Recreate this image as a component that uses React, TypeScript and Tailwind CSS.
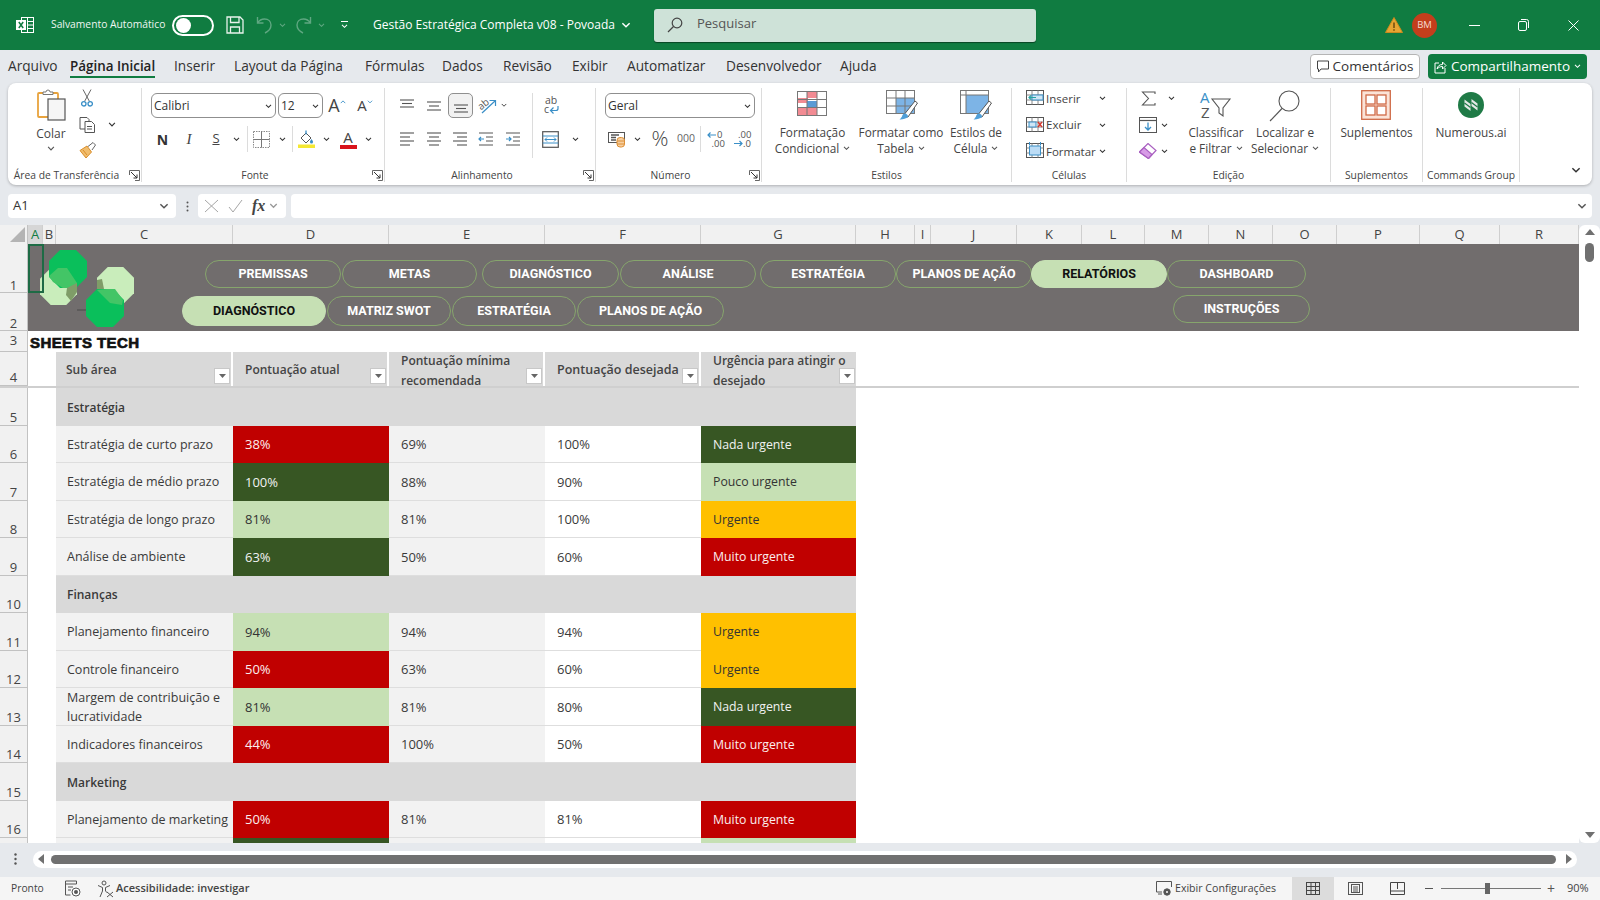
import type { ReactNode } from "react";

const BLUE = "#3a8fc7";

function Chev({ color = "#555", w = 8 }: { color?: string; w?: number }) {
  return (
    <svg width={w} height={w * 0.6} viewBox="0 0 8 5" fill="none" stroke={color} strokeWidth="1.2">
      <path d="M1 1l3 3 3-3" />
    </svg>
  );
}

function Launcher() {
  return (
    <svg width="11" height="11" viewBox="0 0 11 11" fill="none" stroke="#666">
      <path d="M.5 5V.5h10v10H6" />
      <path d="M2 2l6 6M8 4.5V8H4.500" stroke="#333" />
    </svg>
  );
}

function Slot({ className, children }: { className: string; children?: ReactNode }) {
  return <div className={`flex shrink-0 items-center justify-center ${className}`}>{children}</div>;
}

function VSep() {
  return <div className="mx-0 h-[26px] w-px shrink-0 bg-[#dcdcdc]" />;
}

function Group({
  label,
  launcher,
  className,
  children,
}: {
  label: string;
  launcher?: boolean;
  className: string;
  children: ReactNode;
}) {
  return (
    <div className={`flex h-[94px] shrink-0 flex-col border-r border-[#dcdcdc] ${className}`}>
      <div className="h-[80px]">{children}</div>
      <div className="flex h-[14px] items-center text-[10.3px] leading-[14px] text-[#444]">
        <div className="flex-1 whitespace-nowrap text-center">{label}</div>
        {launcher && (
          <div className="flex w-[16px] justify-end pr-[1px]">
            <Launcher />
          </div>
        )}
      </div>
    </div>
  );
}

function BigButton({ icon, lines }: { icon: ReactNode; lines: ReactNode[] }) {
  return (
    <div className="flex flex-col items-center whitespace-nowrap text-[11.8px] leading-[16px] text-[#444]">
      <div className="flex h-[36px] items-start pt-[2px]">{icon}</div>
      {lines.map((l, i) => (
        <div key={i} className="flex items-center gap-[4px]">
          {l}
        </div>
      ))}
    </div>
  );
}

/* title bar icons */
function ExcelLogo() {
  return (
    <svg width="18" height="18" viewBox="0 0 18 18">
      <rect x="5.500" y="1.500" width="12" height="15" fill="none" stroke="#fff" />
      <path d="M11.500 1.500v15M11.500 5.500h6M11.500 9h6M11.500 12.500h6" stroke="#fff" />
      <rect x="0" y="4" width="10" height="10" fill="#fff" />
      <path d="M2.800 6l4.400 6M7.200 6l-4.400 6" stroke="#107c41" strokeWidth="1.500" />
    </svg>
  );
}

function SaveIcon() {
  return (
    <svg width="18" height="18" viewBox="0 0 18 18" fill="none" stroke="#e8f2ec" strokeWidth="1.300">
      <path d="M1 1h13l3 3v13H1zM4.500 1v5.500h8.500V1M4.500 17v-6h9v6" />
    </svg>
  );
}

function Undo({ flip }: { flip?: boolean }) {
  return (
    <svg width="17" height="18" viewBox="0 0 17 18" fill="none" stroke="#5fa781" strokeWidth="1.400" className={flip ? "-scale-x-100" : ""}>
      <path d="M1.500 1v6h6M1.500 7c2-3 4-4 7-4 4 0 6.500 2.500 6.500 6 0 3-2 6-6 8" />
    </svg>
  );
}

function SearchIcon() {
  return (
    <svg width="16" height="16" viewBox="0 0 16 16" fill="none" stroke="#444" strokeWidth="1.200">
      <circle cx="10" cy="6" r="4.800" />
      <path d="M6.500 9.500L1 15" />
    </svg>
  );
}

function Warn() {
  return (
    <svg width="18" height="16" viewBox="0 0 18 16">
      <path d="M9 .5L17.500 15.500H.5z" fill="#e6a532" stroke="#c98a1e" />
      <path d="M9 5.500v5.500M9 12.300v1.500" stroke="#5b3d08" strokeWidth="1.300" />
    </svg>
  );
}

function CommentIcon() {
  return (
    <svg width="12" height="13" viewBox="0 0 12 13" fill="none" stroke="#444">
      <path d="M.5 1h11v8H4L1.500 12V9H.5z" />
    </svg>
  );
}

function ShareIcon() {
  return (
    <svg width="13" height="14" viewBox="0 0 13 14" fill="none" stroke="#fff">
      <path d="M5 3H1v10h10V8M3 9c.5-3 2.500-4.500 5.500-4.500V2L12 5.500 8.500 9V6.500C6 6.500 4.500 7.500 3 9z" />
    </svg>
  );
}

/* clipboard */
function PasteIcon() {
  return (
    <svg width="29" height="33" viewBox="0 0 29 33">
      <rect x="1" y="5" width="20" height="24" rx="1" fill="#fff" stroke="#e8a33d" strokeWidth="1.800" />
      <path d="M6 6V4h3a2 2 0 014 0h3v2.500H6z" fill="#fff" stroke="#777" />
      <rect x="11" y="11" width="17" height="21" fill="#f6f6f6" stroke="#555" strokeWidth="1.200" />
    </svg>
  );
}

function CutIcon() {
  return (
    <svg width="12" height="18" viewBox="0 0 12 18" fill="none">
      <path d="M2 .5l6.500 12M10 .5L3.500 12.500" stroke="#666" />
      <circle cx="2.800" cy="14.800" r="2.200" stroke={BLUE} strokeWidth="1.300" />
      <circle cx="9.200" cy="14.800" r="2.200" stroke={BLUE} strokeWidth="1.300" />
    </svg>
  );
}

function CopyIcon() {
  return (
    <svg width="17" height="16" viewBox="0 0 17 16" fill="#fff" stroke="#555">
      <path d="M1 .5h7l2 2V12H1z" />
      <path d="M6 4.500h6.500l3 3v8H6z" />
      <path d="M8 9.500h5M8 12h5" />
    </svg>
  );
}

function PainterIcon() {
  return (
    <svg width="17" height="17" viewBox="0 0 17 17">
      <path d="M1 8.500L8 4l4.500 6L7 16z" fill="#f1bd6d" stroke="#d98e2b" />
      <path d="M9 4.500L14 .5l2.500 2.500-3.500 5" fill="#fff" stroke="#666" />
      <path d="M4 8l4 5" stroke="#d98e2b" />
    </svg>
  );
}

function Select({ label, className }: { label: string; className: string }) {
  return (
    <div className={`flex h-[25px] items-center justify-between rounded-[6px] border border-[#8f8f8f] bg-white pl-[2px] pr-[3px] pt-[1px] text-[12px] text-[#333] ${className}`}>
      <span>{label}</span>
      <Chev color="#333" w={7} />
    </div>
  );
}

function BordersIcon() {
  return (
    <svg width="17" height="17" viewBox="0 0 17 17" fill="none" stroke="#8a8a8a" strokeDasharray="1.500 1">
      <rect x=".5" y=".5" width="16" height="16" />
      <path d="M8.500.5v16M.5 8.500h16" strokeDasharray="none" stroke="#777" />
    </svg>
  );
}

function FillIcon() {
  return (
    <svg width="18" height="18" viewBox="0 0 18 18">
      <path d="M3 8l5-5 5 5-5 5z" fill="#fff" stroke="#555" />
      <path d="M8 .5v4" stroke={BLUE} strokeWidth="1.300" />
      <path d="M13.500 9c1 1.500 1.500 2 1.500 3a1.500 1.500 0 01-3 0c0-1 .5-1.500 1.500-3z" fill={BLUE} />
      <rect x="0" y="14.500" width="17" height="3.500" fill="#f5e832" />
    </svg>
  );
}

function FontColor() {
  return (
    <div className="flex w-[17px] flex-col items-center">
      <span className="text-[15px] leading-[14px] text-[#444]">A</span>
      <div className="mt-px h-[4px] w-[17px] bg-[#d8141c]" />
    </div>
  );
}

function Lines({ rows }: { rows: [number, number, number][] }) {
  return (
    <svg width="16" height="14" viewBox="0 0 16 14" stroke="#555" strokeWidth="1.100">
      {rows.map(([a, b, y], i) => (
        <path key={i} d={`M${a} ${y}H${b}`} />
      ))}
    </svg>
  );
}

function OrientIcon() {
  return (
    <svg width="19" height="17" viewBox="0 0 19 17" fill="none" overflow="visible">
      <text x="0" y="11" fontSize="10" fill="#555" fontFamily="Open Sans" transform="rotate(-40 5 8)">ab</text>
      <path d="M4 16L17 4M11.500 3.500H17.500V9" stroke={BLUE} strokeWidth="1.200" />
    </svg>
  );
}

function WrapIcon() {
  return (
    <svg width="16" height="19" viewBox="0 0 16 19" fill="none" overflow="visible">
      <text x="1" y="8" fontSize="10.500" fill="#555" fontFamily="Open Sans">ab</text>
      <text x="0" y="17" fontSize="10.500" fill="#555" fontFamily="Open Sans">c</text>
      <path d="M14 10v2.500a2 2 0 01-2 2H7M9.500 11.500L6.500 14.500l3 3" stroke={BLUE} strokeWidth="1.200" />
    </svg>
  );
}

function IndentIcon({ inc }: { inc?: boolean }) {
  return (
    <svg width="16" height="14" viewBox="0 0 16 14" fill="none">
      <path d="M1 1h14M8 5h7M8 9h7M1 13h14" stroke="#555" />
      <path d={inc ? "M1 7h5M4 5l2 2-2 2" : "M6 7H1M3 5L1 7l2 2"} stroke={BLUE} strokeWidth="1.200" />
    </svg>
  );
}

function MergeIcon() {
  return (
    <svg width="17" height="17" viewBox="0 0 17 17" fill="#fff">
      <rect x=".7" y=".7" width="15.600" height="15.600" stroke="#555" strokeWidth="1.200" />
      <path d="M.7 5h15.600M.7 12h15.600" stroke={BLUE} />
      <path d="M3 8.500h11M5 6.500l-2 2 2 2M12 6.500l2 2-2 2" stroke={BLUE} fill="none" />
    </svg>
  );
}

function CurrencyIcon() {
  return (
    <svg width="18" height="17" viewBox="0 0 18 17">
      <rect x=".5" y="1.500" width="16" height="10" fill="#fff" stroke="#555" />
      <path d="M3 4h8M3 6.500h5M3 9h5" stroke="#555" strokeWidth="1.300" />
      <rect x="9" y="6.500" width="7.500" height="9.500" rx="3" fill="#f7cfa0" stroke="#dd8f35" />
      <path d="M9 10h7.500M9 13h7.500" stroke="#dd8f35" />
    </svg>
  );
}

function DecimalIcon({ inc }: { inc?: boolean }) {
  return (
    <svg width="18" height="18" viewBox="0 0 18 18" fontFamily="Open Sans" fontSize="9.500" fill="#555" overflow="visible">
      <text x={inc ? 10 : 5} y="7.500">{inc ? "0" : ".00"}</text>
      <text x={inc ? 4.500 : 10} y="17">{inc ? ".00" : ".0"}</text>
      {inc ? (
        <path d="M9 5H1M3.500 2.500L1 5l2.500 2.500" stroke={BLUE} fill="none" strokeWidth="1.200" />
      ) : (
        <path d="M1 13.500h8M6.500 11L9 13.500 6.500 16" stroke={BLUE} fill="none" strokeWidth="1.200" />
      )}
    </svg>
  );
}

/* styles */
function Brush() {
  return (
    <g>
      <path d="M17 26l12-15 2.500 2L22 27z" fill="#fff" stroke="#555" />
      <path d="M13.500 29.500c2 .5 7-1 8.500-2.500 .5-2-2-4-4-3.500-2 1-1.500 4-4.500 6z" fill="#4f9fd8" />
    </g>
  );
}

function CondFmtIcon() {
  return (
    <svg width="30" height="25" viewBox="0 0 30 25">
      <rect x=".5" y=".5" width="29" height="24" fill="#fff" stroke="#777" />
      <rect x="10" y="1" width="10" height="6" fill="#f28b93" />
      <rect x="1" y="7" width="10" height="5" fill="#f28b93" />
      <rect x="10" y="10" width="10" height="6" fill="#5b9bd5" />
      <rect x="10" y="17" width="10" height="7" fill="#f28b93" />
      <rect x="1" y="17" width="9" height="7" fill="#f28b93" />
      <path d="M10 .5v24M20 .5v24M.5 8.500h29M.5 16.500h29" stroke="#777" />
    </svg>
  );
}

function TableIcon() {
  return (
    <svg width="34" height="30" viewBox="0 0 34 30" className="ml-[4px]">
      <rect x=".5" y=".5" width="28" height="23" fill="#fff" stroke="#777" />
      <rect x="10" y="8" width="18" height="15" fill="#7db4e6" />
      <path d="M10 .5v23M19 .5v23M.5 8h28M.5 16h28" stroke="#777" />
      <Brush />
    </svg>
  );
}

function CellStyleIcon() {
  return (
    <svg width="34" height="30" viewBox="0 0 34 30" className="ml-[2px]">
      <rect x=".5" y=".5" width="28" height="23" fill="#fff" stroke="#777" />
      <rect x="6" y="5" width="22" height="18" fill="#7db4e6" />
      <path d="M.5 5h28M6 .5v23" stroke="#777" />
      <Brush />
    </svg>
  );
}

function CellOpIcon({ type }: { type: "in" | "del" | "fmt" }) {
  return (
    <svg width="19" height="18" viewBox="0 0 19 18" fill="none">
      <rect x=".5" y="1.500" width="17" height="14" fill="#fff" stroke="#555" />
      <path d="M6 1.500v14M12 1.500v14M.5 6h17M.5 11h17" stroke="#888" />
      {type === "in" && (
        <>
          <rect x="6" y="6" width="11" height="5" fill="#cfe6f5" stroke={BLUE} />
          <path d="M10 8.500H3M5 6.500l-2 2 2 2" stroke="#27a3a3" strokeWidth="1.200" />
        </>
      )}
      {type === "del" && (
        <>
          <rect x="3" y="6" width="7" height="5" fill="#cfe6f5" stroke={BLUE} />
          <path d="M12 6l4 5M16 6l-4 5" stroke="#d8352a" strokeWidth="1.300" />
        </>
      )}
      {type === "fmt" && (
        <>
          <rect x="3.500" y="4" width="11" height="9" fill="#bcdcf5" stroke={BLUE} />
          <path d="M3.500 0v3M14.500 0v3" stroke={BLUE} />
        </>
      )}
    </svg>
  );
}

function SumIcon() {
  return (
    <svg width="15" height="15" viewBox="0 0 15 15" fill="none" stroke="#555" strokeWidth="1.100">
      <path d="M14 3V1H1.500l6 6.500-6 6.500H14v-2" />
    </svg>
  );
}

function FillDown() {
  return (
    <svg width="18" height="16" viewBox="0 0 18 16" fill="none">
      <rect x=".5" y=".5" width="17" height="15" fill="#fff" stroke="#555" />
      <path d="M.5 3.500h17" stroke="#555" strokeWidth="1.200" />
      <path d="M9 5.500v7M6 10l3 3 3-3" stroke={BLUE} strokeWidth="1.300" />
    </svg>
  );
}

function ClearIcon() {
  return (
    <svg width="18" height="16" viewBox="0 0 18 16">
      <path d="M.5 9L9 .5l8 7-7.500 8z" fill="#fff" stroke="#a95fc0" strokeWidth="1.200" />
      <path d="M.5 9L5 4.500l8 7-3.500 4z" fill="#d79be6" stroke="#a95fc0" strokeWidth="1.200" />
    </svg>
  );
}

function SortIcon() {
  return (
    <svg width="32" height="30" viewBox="0 0 32 30" fontFamily="Open Sans" fontSize="15" overflow="visible">
      <text x="0" y="13" fill={BLUE}>A</text>
      <text x="1" y="28" fill="#555">Z</text>
      <path d="M12 9h18l-7 9v8l-4-3v-5z" fill="#fff" stroke="#555" strokeWidth="1.100" />
    </svg>
  );
}

function FindIcon() {
  return (
    <svg width="32" height="32" viewBox="0 0 32 32" fill="none" stroke="#555" strokeWidth="1.100">
      <circle cx="20" cy="11" r="10" fill="#fff" />
      <path d="M13 18.500L1 31" />
    </svg>
  );
}

function AddinsIcon() {
  return (
    <svg width="30" height="30" viewBox="0 0 30 30" fill="#fbe3d7" stroke="#cf6a47" strokeWidth="1.300">
      <rect x=".7" y=".7" width="28.600" height="28.600" />
      <rect x="5" y="5" width="9" height="9" fill="#fff" />
      <rect x="16" y="5" width="9" height="9" fill="#fff" />
      <rect x="5" y="16" width="9" height="9" fill="#fff" />
      <rect x="16" y="16" width="9" height="9" fill="#fff" />
    </svg>
  );
}

function NumerousIcon() {
  return (
    <svg width="26" height="26" viewBox="0 0 26 26">
      <circle cx="13" cy="13" r="13" fill="#1f7a46" />
      <path d="M6.500 7.500l6 4.500v7l-6-4.500z" fill="#e4e9e6" />
      <path d="M13.500 7l6 4.500v7l-6-4.500z" fill="#e4e9e6" />
      <path d="M6.500 11l6 4.500M13.500 10.500l6 4.500" stroke="#1f7a46" strokeWidth="1.200" />
    </svg>
  );
}

/* status bar */
function MacroIcon() {
  return (
    <svg width="16" height="17" viewBox="0 0 16 17" fill="none" stroke="#555">
      <path d="M.5 1h11v3H.5zM.5 4v11h5M3 7h5M3 10h3" />
      <circle cx="11" cy="12" r="4" fill="#fff" />
      <circle cx="11" cy="12" r="2" fill="#555" stroke="none" />
    </svg>
  );
}

function AccessIcon() {
  return (
    <svg width="17" height="18" viewBox="0 0 17 18" fill="none" stroke="#555">
      <circle cx="7" cy="3" r="2" />
      <path d="M1 5.500l4.500 2V11L3 17M13 5.500l-4.500 2V11l2 2M10 12l6 5M16 12l-6 5" />
    </svg>
  );
}

function DisplayIcon() {
  return (
    <svg width="17" height="16" viewBox="0 0 17 16" fill="none" stroke="#555">
      <path d="M6 11H.5V.5h15V6" />
      <path d="M2 13h4" />
      <circle cx="11" cy="11" r="3.200" fill="#555" />
      <circle cx="11" cy="11" r="1" fill="#fff" stroke="none" />
    </svg>
  );
}

function Dropdown() {
  return (
    <div className="absolute bottom-[2px] right-[1px] flex h-[16px] w-[16px] items-center justify-center border border-[#c8c8c8] bg-white">
      <svg width="7" height="4" viewBox="0 0 7 4">
        <path d="M0 0h7L3.500 4z" fill="#666" />
      </svg>
    </div>
  );
}

function Logo() {
  const oct = (x: number, y: number, s: number) => {
    const c = s * 0.29;
    return `${x + c},${y} ${x + s - c},${y} ${x + s},${y + c} ${x + s},${y + s - c} ${x + s - c},${y + s} ${x + c},${y + s} ${x},${y + s - c} ${x},${y + c}`;
  };
  return (
    <svg width="120" height="90" viewBox="0 0 120 90" className="absolute left-[8px] top-[2px]">
      <polygon points={oct(4, 22, 37)} fill="#c9edbb" />
      <polygon points={oct(13, 4, 38)} fill="#0abf5b" />
      <polygon points="13,30 22,22 31,22 41,37 40,42 27,42 17,36" fill="#43c566" />
      <polygon points="31,42 41,37 41,46 35,55 30,49" fill="#7f9d68" />
      <polygon points={oct(61, 21, 37)} fill="#c9edbb" />
      <polygon points="61,34 66,33 68,43 61,43" fill="#7f9d68" />
      <polygon points={oct(50, 43, 38)} fill="#0abf5b" />
      <polygon points="61,44 71,43 79,43 87,54 86,59 74,57" fill="#43c566" />
      <path d="M41 64h9" stroke="#4a4a4a" />
    </svg>
  );
}

type Status = "red" | "dark" | "light" | "amber";

type Row =
  | { cat: string }
  | { name: string; cur: string; curS: Status; min: string; want: string; urg: string; urgS: Status };

const statusClass: Record<Status, string> = {
  red: "bg-[#c00000] text-[#fbeeee]",
  dark: "bg-[#375623] text-[#f2f2f2]",
  light: "bg-[#c6e0b4] text-[#333]",
  amber: "bg-[#ffc000] text-[#333]",
};

const rows: Row[] = [
  { cat: "Estratégia" },
  { name: "Estratégia de curto prazo", cur: "38%", curS: "red", min: "69%", want: "100%", urg: "Nada urgente", urgS: "dark" },
  { name: "Estratégia de médio prazo", cur: "100%", curS: "dark", min: "88%", want: "90%", urg: "Pouco urgente", urgS: "light" },
  { name: "Estratégia de longo prazo", cur: "81%", curS: "light", min: "81%", want: "100%", urg: "Urgente", urgS: "amber" },
  { name: "Análise de ambiente", cur: "63%", curS: "dark", min: "50%", want: "60%", urg: "Muito urgente", urgS: "red" },
  { cat: "Finanças" },
  { name: "Planejamento financeiro", cur: "94%", curS: "light", min: "94%", want: "94%", urg: "Urgente", urgS: "amber" },
  { name: "Controle financeiro", cur: "50%", curS: "red", min: "63%", want: "60%", urg: "Urgente", urgS: "amber" },
  { name: "Margem de contribuição e lucratividade", cur: "81%", curS: "light", min: "81%", want: "80%", urg: "Nada urgente", urgS: "dark" },
  { name: "Indicadores financeiros", cur: "44%", curS: "red", min: "100%", want: "50%", urg: "Muito urgente", urgS: "red" },
  { cat: "Marketing" },
  { name: "Planejamento de marketing", cur: "50%", curS: "red", min: "81%", want: "81%", urg: "Muito urgente", urgS: "red" },
];

const columns = [
  { l: "A", w: "w-[15px]" },
  { l: "B", w: "w-[13px]" },
  { l: "C", w: "w-[177px]" },
  { l: "D", w: "w-[156px]" },
  { l: "E", w: "w-[156px]" },
  { l: "F", w: "w-[156px]" },
  { l: "G", w: "w-[155px]" },
  { l: "H", w: "w-[59px]" },
  { l: "I", w: "w-[16px]" },
  { l: "J", w: "w-[86px]" },
  { l: "K", w: "w-[65px]" },
  { l: "L", w: "w-[63px]" },
  { l: "M", w: "w-[64px]" },
  { l: "N", w: "w-[64px]" },
  { l: "O", w: "w-[64px]" },
  { l: "P", w: "w-[83px]" },
  { l: "Q", w: "w-[80px]" },
  { l: "R", w: "w-[79px]" },
];

const tabs = [
  { t: "Arquivo", w: "w-[62px]" },
  { t: "Página Inicial", w: "w-[104px]" },
  { t: "Inserir", w: "w-[60px]" },
  { t: "Layout da Página", w: "w-[131px]" },
  { t: "Fórmulas", w: "w-[77px]" },
  { t: "Dados", w: "w-[61px]" },
  { t: "Revisão", w: "w-[69px]" },
  { t: "Exibir", w: "w-[55px]" },
  { t: "Automatizar", w: "w-[99px]" },
  { t: "Desenvolvedor", w: "w-[114px]" },
  { t: "Ajuda", w: "w-[60px]" },
];

const pillsTop = [
  { t: "PREMISSAS", c: "w-[136px]" },
  { t: "METAS", c: "w-[135px] ml-[1px]" },
  { t: "DIAGNÓSTICO", c: "w-[137px] ml-[5px]" },
  { t: "ANÁLISE", c: "w-[136px] ml-[1px]" },
  { t: "ESTRATÉGIA", c: "w-[136px] ml-[4px]" },
  { t: "PLANOS DE AÇÃO", c: "w-[136px]" },
  { t: "RELATÓRIOS", c: "w-[136px] -ml-[1px]", on: true },
  { t: "DASHBOARD", c: "w-[139px]" },
];

const pillsBottom = [
  { t: "DIAGNÓSTICO", c: "w-[144px]", on: true },
  { t: "MATRIZ SWOT", c: "w-[124px] ml-[1px]" },
  { t: "ESTRATÉGIA", c: "w-[124px] ml-[1px]" },
  { t: "PLANOS DE AÇÃO", c: "w-[147px] ml-[1px]" },
];

function Pill({ t, c, on, h = "h-[28px]" }: { t: string; c: string; on?: boolean; h?: string }) {
  return (
    <div
      className={`flex shrink-0 items-center justify-center rounded-full border font-['Roboto',sans-serif] text-[12.5px] font-bold ${h} ${c} ${
        on ? "border-[#c6e0b4] bg-[#c6e0b4] text-[#111]" : "border-[#86a56c] text-white"
      }`}
    >
      {t}
    </div>
  );
}

function RowHead({ n, className = "", lead = "leading-[15px]" }: { n?: number; className?: string; lead?: string }) {
  return (
    <div className={`flex w-[28px] shrink-0 items-end justify-center border-b border-r border-[#c2c2c2] bg-[#f1f1f1] text-[13px] text-[#444] ${lead} ${className}`}>
      {n}
    </div>
  );
}

function Ribbon() {
  return (
    <div className="flex h-[102px] w-[1584px] shrink-0 rounded-[8px] bg-white pt-[5px] shadow-[0_1px_3px_rgba(0,0,0,0.25)]">
      <Group label="Área de Transferência" launcher className="w-[134px]">
        <div className="flex">
          <div className="flex w-[70px] flex-col items-center pl-[16px] text-[12px] text-[#444]">
            <PasteIcon />
            <div className="mt-[5px] leading-[16px]">Colar</div>
            <div className="mt-[4px]">
              <Chev />
            </div>
          </div>
          <div className="-mt-[4px] flex flex-col">
            <Slot className="h-[27px] w-[18px]"><CutIcon /></Slot>
            <div className="flex items-center">
              <Slot className="h-[27px] w-[18px]"><CopyIcon /></Slot>
              <div className="ml-[12px]"><Chev color="#333" /></div>
            </div>
            <Slot className="h-[24px] w-[18px]"><PainterIcon /></Slot>
          </div>
        </div>
      </Group>

      <Group label="Fonte" launcher className="w-[243px]">
        <div className="flex h-[30px] items-end pl-[9px]">
          <Select label="Calibri" className="w-[125px]" />
          <Select label="12" className="ml-[2px] w-[45px]" />
          <Slot className="h-[25px] w-[28px] text-[18px] text-[#444]">
            A<span className="mb-[8px]"><svg width="6" height="4" viewBox="0 0 8 5" fill="none" stroke={BLUE} strokeWidth="1.200"><path d="M1 4l3-3 3 3" /></svg></span>
          </Slot>
          <Slot className="h-[25px] w-[28px] text-[15px] text-[#444]">
            A<span className="mb-[8px]"><Chev color={BLUE} w={6} /></span>
          </Slot>
        </div>
        <div className="mt-[10px] flex h-[22px] items-center pl-[8px] text-[#444]">
          <Slot className="w-[25px] text-[14px] font-bold text-[#333]">N</Slot>
          <Slot className="w-[28px] font-['Liberation_Serif',serif] text-[15px] italic">I</Slot>
          <Slot className="w-[26px] text-[13px] underline">S</Slot>
          <Slot className="w-[15px]"><Chev color="#333" w={7} /></Slot>
          <Slot className="w-[6px]"><VSep /></Slot>
          <Slot className="w-[22px]"><BordersIcon /></Slot>
          <Slot className="w-[20px]"><Chev color="#333" w={7} /></Slot>
          <VSep />
          <Slot className="w-[27px]"><FillIcon /></Slot>
          <Slot className="w-[12px]"><Chev color="#333" w={7} /></Slot>
          <Slot className="w-[32px]"><FontColor /></Slot>
          <Slot className="w-[8px]"><Chev color="#333" w={7} /></Slot>
        </div>
      </Group>

      <Group label="Alinhamento" launcher className="w-[211px]">
        <div className="flex">
          <div className="w-[147px]">
            <div className="flex h-[30px] items-end pl-[8px]">
              <Slot className="h-[25px] w-[28px]"><Lines rows={[[1, 15, 1], [3, 13, 4.500], [1, 15, 8]]} /></Slot>
              <Slot className="h-[25px] w-[26px]"><Lines rows={[[1, 15, 3], [3, 13, 7], [1, 15, 11]]} /></Slot>
              <Slot className="ml-[1px] h-[25px] w-[25px] rounded-[5px] border border-[#8f8f8f] bg-[#f1f1f1]">
                <Lines rows={[[1, 15, 6], [3, 13, 9.500], [1, 15, 13]]} />
              </Slot>
              <Slot className="h-[25px] w-[28px]"><OrientIcon /></Slot>
              <Slot className="h-[25px] w-[6px]"><Chev color="#333" w={7} /></Slot>
            </div>
            <div className="mt-[10px] flex h-[22px] items-center pl-[8px]">
              <Slot className="w-[28px]"><Lines rows={[[1, 15, 1], [1, 11, 5], [1, 15, 9], [1, 11, 13]]} /></Slot>
              <Slot className="w-[25px]"><Lines rows={[[1, 15, 1], [3, 13, 5], [1, 15, 9], [3, 13, 13]]} /></Slot>
              <Slot className="w-[27px]"><Lines rows={[[1, 15, 1], [5, 15, 5], [1, 15, 9], [5, 15, 13]]} /></Slot>
              <Slot className="w-[26px]"><IndentIcon /></Slot>
              <Slot className="w-[27px]"><IndentIcon inc /></Slot>
            </div>
          </div>
          <div className="mt-[5px] h-[65px] w-px shrink-0 bg-[#dcdcdc]" />
          <div>
            <Slot className="mt-[5px] h-[25px] w-[38px]"><WrapIcon /></Slot>
            <div className="mt-[10px] flex h-[22px] items-center">
              <Slot className="w-[34px]"><MergeIcon /></Slot>
              <Slot className="w-[16px]"><Chev color="#333" w={7} /></Slot>
            </div>
          </div>
        </div>
      </Group>

      <Group label="Número" launcher className="w-[166px]">
        <div className="flex h-[30px] items-end pl-[9px]">
          <Select label="Geral" className="w-[150px]" />
        </div>
        <div className="mt-[10px] flex h-[22px] items-center pl-[12px]">
          <Slot className="w-[18px]"><CurrencyIcon /></Slot>
          <Slot className="w-[22px]"><Chev color="#333" w={7} /></Slot>
          <Slot className="w-[24px] text-[21px] font-light text-[#444]">%</Slot>
          <Slot className="w-[28px] text-[10.500px] text-[#666]">000</Slot>
          <VSep />
          <Slot className="w-[30px]"><DecimalIcon inc /></Slot>
          <Slot className="w-[22px]"><DecimalIcon /></Slot>
        </div>
      </Group>

      <Group label="Estilos" className="w-[250px]">
        <div className="flex">
          <div className="flex w-[101px] shrink-0 justify-center">
            <BigButton
              icon={<div className="pt-[1px]"><CondFmtIcon /></div>}
              lines={["Formatação", <>Condicional <Chev w={7} /></>]}
            />
          </div>
          <div className="flex w-[76px] shrink-0 justify-center">
            <BigButton icon={<TableIcon />} lines={["Formatar como", <>Tabela <Chev w={7} /></>]} />
          </div>
          <div className="flex w-[74px] shrink-0 justify-center">
            <BigButton icon={<CellStyleIcon />} lines={["Estilos de", <>Célula <Chev w={7} /></>]} />
          </div>
        </div>
      </Group>

      <Group label="Células" className="w-[115px]">
        <div className="-mt-[3px] text-[11.5px] text-[#444]">
          {[
            { t: "Inserir", k: "in" as const },
            { t: "Excluir", k: "del" as const },
            { t: "Formatar", k: "fmt" as const },
          ].map((r) => (
            <div key={r.t} className="flex h-[26.5px] items-center pl-[14px]">
              <Slot className="w-[19px]"><CellOpIcon type={r.k} /></Slot>
              <div className="ml-[1px] w-[53px] whitespace-nowrap">{r.t}</div>
              <Chev color="#333" w={7} />
            </div>
          ))}
        </div>
      </Group>

      <Group label="Edição" className="w-[204px]">
        <div className="flex">
          <div className="-mt-[3px] w-[53px] pl-[12px]">
            <div className="flex h-[26.5px] items-center">
              <Slot className="w-[18px]"><SumIcon /></Slot>
              <div className="ml-[11px]"><Chev color="#333" w={7} /></div>
            </div>
            <div className="flex h-[26.5px] items-center">
              <Slot className="w-[18px]"><FillDown /></Slot>
              <div className="ml-[4px]"><Chev color="#333" w={7} /></div>
            </div>
            <div className="flex h-[26.5px] items-center">
              <Slot className="w-[18px]"><ClearIcon /></Slot>
              <div className="ml-[4px]"><Chev color="#333" w={7} /></div>
            </div>
          </div>
          <div className="flex w-[72px] justify-center">
            <BigButton icon={<SortIcon />} lines={["Classificar", <>e Filtrar <Chev w={7} /></>]} />
          </div>
          <div className="flex w-[66px] justify-center">
            <BigButton icon={<FindIcon />} lines={["Localizar e", <>Selecionar <Chev w={7} /></>]} />
          </div>
        </div>
      </Group>

      <Group label="Suplementos" className="w-[92px]">
        <div className="flex justify-center">
          <BigButton icon={<AddinsIcon />} lines={["Suplementos"]} />
        </div>
      </Group>

      <Group label="Commands Group" className="w-[97px]">
        <div className="flex justify-center">
          <BigButton icon={<div className="pt-[2px]"><NumerousIcon /></div>} lines={["Numerous.ai"]} />
        </div>
      </Group>

      <div className="flex flex-1 items-end justify-end pb-[12px] pr-[11px]">
        <Chev color="#333" w={10} />
      </div>
    </div>
  );
}

function SheetRows() {
  return (
    <div className="min-h-0 flex-1 overflow-hidden text-[13px] text-[#3a3a3a]">
      {rows.map((r, i) => (
        <div key={i} className="flex h-[37.5px]">
          <RowHead n={i + 5} />
          <div className="w-[28px] shrink-0" />
          {"cat" in r ? (
            <div className="flex w-[800px] items-center bg-[#d9d9d9] pl-[11px] pt-[2px] text-[12px] font-semibold">{r.cat}</div>
          ) : (
            <>
              <div className="flex w-[177px] items-center border-b border-[#dedede] bg-[#f2f2f2] pl-[11px] pt-[1px] text-[12.5px] leading-[19px]">{r.name}</div>
              <div className={`flex w-[156px] items-center pl-[12px] pt-[1px] ${statusClass[r.curS]}`}>{r.cur}</div>
              <div className="flex w-[156px] items-center border-b border-[#dedede] bg-[#f2f2f2] pl-[12px] pt-[2px]">{r.min}</div>
              <div className="flex w-[156px] items-center border-b border-[#dedede] bg-white pl-[12px] pt-[2px]">{r.want}</div>
              <div className={`flex w-[155px] items-center pl-[12px] pt-[1px] text-[12.3px] ${statusClass[r.urgS]}`}>{r.urg}</div>
            </>
          )}
        </div>
      ))}
      <div className="flex h-[6px]">
        <RowHead className="overflow-hidden" />
        <div className="w-[28px] shrink-0" />
        <div className="w-[177px] bg-[#f2f2f2]" />
        <div className="w-[156px] bg-[#375623]" />
        <div className="w-[156px] bg-[#f2f2f2]" />
        <div className="w-[156px]" />
        <div className="w-[155px] bg-[#c6e0b4]" />
      </div>
    </div>
  );
}

export default function App() {
  return (
    <div className="flex h-[900px] w-[1600px] flex-col overflow-hidden bg-[#e6e9ed] font-['Open_Sans',sans-serif] text-[#333]">
      {/* title bar */}
      <div className="flex h-[50px] shrink-0 items-center bg-[#107c41] text-white">
        <div className="ml-[16px]"><ExcelLogo /></div>
        <div className="ml-[17px] w-[121px] whitespace-nowrap text-[10.3px] text-[#eef6f1]">Salvamento Automático</div>
        <div className="flex h-[21px] w-[42px] items-center rounded-full border-2 border-white pl-[2px]">
          <div className="h-[15px] w-[15px] rounded-full bg-white" />
        </div>
        <div className="ml-[12px]"><SaveIcon /></div>
        <div className="ml-[12px]"><Undo /></div>
        <div className="ml-[6px]"><Chev color="#5fa781" w={7} /></div>
        <div className="ml-[9px]"><Undo flip /></div>
        <div className="ml-[6px]"><Chev color="#5fa781" w={7} /></div>
        <div className="ml-[16px] flex flex-col items-center gap-[2px]">
          <div className="h-px w-[7px] bg-white" />
          <Chev color="#fff" w={7} />
        </div>
        <div className="ml-[25px] w-[247px] whitespace-nowrap text-[12px]">Gestão Estratégica Completa v08 - Povoada</div>
        <div className="ml-[1px]"><Chev color="#fff" w={10} /></div>
        <div className="ml-[23px] flex h-[33px] w-[382px] items-center rounded-[3px] bg-[#cee2d8] pl-[13px] text-[13px] text-[#555] shadow-[0_1px_1px_rgba(0,0,0,0.45)]">
          <SearchIcon />
          <span className="-mt-[2px] ml-[14px]">Pesquisar</span>
        </div>
        <div className="ml-[349px]"><Warn /></div>
        <div className="ml-[9px] flex h-[25px] w-[25px] items-center justify-center rounded-full bg-[#c43e1c] text-[9.500px] text-[#f5d9cd]">BM</div>
        <div className="ml-[32px] h-px w-[11px] bg-white" />
        <div className="ml-[38px]">
          <svg width="11" height="12" viewBox="0 0 11 12" fill="none" stroke="#fff"><rect x=".5" y="2.500" width="8" height="9" rx="1.500" /><path d="M3 .5h5.500a2 2 0 012 2V9" /></svg>
        </div>
        <div className="ml-[39px]">
          <svg width="11" height="11" viewBox="0 0 11 11" stroke="#fff"><path d="M.5.5l10 10M10.500.5l-10 10" /></svg>
        </div>
      </div>

      {/* tabs */}
      <div className="flex h-[33px] shrink-0 items-center pl-[8px] text-[13.7px] text-[#333]">
        {tabs.map((t) => (
          <div key={t.t} className={`relative flex h-full items-center whitespace-nowrap pb-[1px] ${t.w} ${t.t === "Página Inicial" ? "text-[13.4px] font-semibold text-[#222]" : ""}`}>
            {t.t}
            {t.t === "Página Inicial" && <div className="absolute bottom-[5px] left-0 h-[2px] w-[85px] bg-[#107c41]" />}
          </div>
        ))}
        <div className="ml-auto flex h-[25px] w-[110px] items-center justify-center gap-[4px] rounded-[4px] border border-[#b5b5b5] bg-white text-[13.5px]">
          <CommentIcon />
          Comentários
        </div>
        <div className="ml-[8px] mr-[13px] flex h-[25px] w-[159px] items-center justify-center gap-[4px] rounded-[4px] bg-[#107c41] text-[13.5px] text-white">
          <ShareIcon />
          Compartilhamento
          <Chev color="#fff" w={7} />
        </div>
      </div>

      <div className="flex shrink-0 pl-[8px]">
        <Ribbon />
      </div>

      {/* formula bar */}
      <div className="mt-[9px] flex h-[24px] shrink-0 items-stretch pl-[8px] pr-[8px]">
        <div className="flex w-[168px] items-center justify-between rounded-[4px] bg-white pl-[5px] pr-[7px] text-[13px]">
          A1
          <Chev color="#555" w={10} />
        </div>
        <div className="flex w-[22px] items-center justify-center text-[#555]">
          <svg width="3" height="11" viewBox="0 0 3 11" fill="#555"><circle cx="1.500" cy="1.500" r="1" /><circle cx="1.500" cy="5.500" r="1" /><circle cx="1.500" cy="9.500" r="1" /></svg>
        </div>
        <div className="flex w-[88px] items-center rounded-[4px] bg-white pl-[6px]">
          <svg width="15" height="14" viewBox="0 0 15 14" stroke="#a6a6a6"><path d="M1 1l13 12M14 1L1 13" /></svg>
          <svg className="ml-[9px]" width="15" height="14" viewBox="0 0 15 14" fill="none" stroke="#a6a6a6"><path d="M1 8l4 5L14 1" /></svg>
          <span className="ml-[9px] font-['Liberation_Serif',serif] text-[16px] font-bold italic text-[#444]">fx</span>
          <span className="ml-[4px]"><Chev color="#999" w={9} /></span>
        </div>
        <div className="ml-[5px] flex flex-1 items-center justify-end rounded-[4px] bg-white pr-[5px]">
          <Chev color="#555" w={10} />
        </div>
      </div>

      {/* sheet */}
      <div className="mt-[7px] flex h-[618px] shrink-0">
        <div className="flex w-[1579px] shrink-0 flex-col bg-white">
          <div className="flex h-[19px] shrink-0 bg-[#f1f1f1] text-[13px] leading-[19px] text-[#444]">
            <div className="flex w-[28px] shrink-0 items-end justify-end border-r border-[#c2c2c2] pb-[2px] pr-[2px]">
              <svg width="15" height="15" viewBox="0 0 15 15"><path d="M15 0v15H0z" fill="#b4b4b4" /></svg>
            </div>
            {columns.map((c) => (
              <div key={c.l} className={`shrink-0 border-r border-[#cfcfcf] text-center ${c.w} ${c.l === "A" ? "bg-[#d6d6d6] text-[#107c41]" : ""}`}>
                {c.l}
              </div>
            ))}
          </div>

          <div className="flex h-[87px] shrink-0">
            <div className="flex w-[28px] shrink-0 flex-col">
              <RowHead n={1} lead="leading-[13px]" className="h-[49px] bg-[#d6d6d6] text-[#107c41]" />
              <RowHead n={2} lead="leading-[13px]" className="h-[38px]" />
            </div>
            <div className="relative flex-1 bg-[#716d6d] pt-[16px]">
              <Logo />
              <div className="absolute left-0 top-0 h-[49px] w-[16px] border-2 border-[#1e6b45]" />
              <div className="relative flex pl-[177px]">
                {pillsTop.map((p) => (
                  <Pill key={p.t} {...p} />
                ))}
              </div>
              <div className="relative mt-[8px] flex pl-[154px]">
                {pillsBottom.map((p) => (
                  <Pill key={p.t} {...p} h="h-[30px]" />
                ))}
                <Pill t="INSTRUÇÕES" c="w-[137px] ml-[449px] -mt-[1px]" />
              </div>
            </div>
          </div>

          <div className="flex h-[21px] shrink-0">
            <RowHead n={3} lead="leading-[21px]" />
            <div className="whitespace-nowrap pl-[2px] font-['Liberation_Sans',sans-serif] text-[15px] font-bold leading-[24px] tracking-[0.4px] text-[#111] [-webkit-text-stroke:0.7px_#111]">SHEETS TECH</div>
          </div>

          <div className="flex h-[36px] shrink-0 border-b-2 border-[#cfcfcf] text-[12px] font-semibold leading-[20px] text-[#444]">
            <RowHead n={4} className="font-normal" />
            <div className="w-[28px] shrink-0" />
            <div className="relative flex w-[177px] items-center border-r-2 border-white bg-[#d9d9d9] pl-[10px] pt-[1px]">Sub área<Dropdown /></div>
            <div className="relative flex w-[156px] items-center border-r-2 border-white bg-[#d9d9d9] pl-[12px] pt-[1px]">Pontuação atual<Dropdown /></div>
            <div className="relative flex w-[156px] items-center border-r-2 border-white bg-[#d9d9d9] pl-[12px] pt-[3px]">Pontuação mínima recomendada<Dropdown /></div>
            <div className="relative flex w-[156px] items-center border-r-2 border-white bg-[#d9d9d9] pl-[12px] pt-[2px] text-[12.5px]">Pontuação desejada<Dropdown /></div>
            <div className="relative flex w-[155px] items-center bg-[#d9d9d9] pl-[12px] pt-[3px]">Urgência para atingir o desejado<Dropdown /></div>
          </div>

          <SheetRows />
        </div>

        {/* vertical scrollbar */}
        <div className="flex flex-1 flex-col items-center rounded-[6px] bg-white pt-[4px]">
          <svg width="10" height="6" viewBox="0 0 10 6"><path d="M5 0l5 6H0z" fill="#707070" /></svg>
          <div className="mt-[8px] h-[19px] w-[9px] rounded-full bg-[#707070]" />
          <div className="flex-1" />
          <svg className="mb-[5px]" width="10" height="6" viewBox="0 0 10 6"><path d="M5 6L0 0h10z" fill="#707070" /></svg>
        </div>
      </div>

      {/* horizontal scrollbar */}
      <div className="flex h-[34px] shrink-0 items-center pb-[2px] pl-[14px]">
        <svg width="3" height="12" viewBox="0 0 3 12" fill="#555"><circle cx="1.500" cy="1.500" r="1.200" /><circle cx="1.500" cy="6" r="1.200" /><circle cx="1.500" cy="10.500" r="1.200" /></svg>
        <div className="ml-[16px] flex h-[17px] w-[1544px] items-center rounded-full bg-white pl-[5px]">
          <svg width="6" height="10" viewBox="0 0 6 10"><path d="M0 5l6-5v10z" fill="#707070" /></svg>
          <div className="ml-[7px] h-[9px] w-[1505px] rounded-full bg-[#707070]" />
          <svg className="ml-[10px]" width="6" height="10" viewBox="0 0 6 10"><path d="M6 5L0 0v10z" fill="#707070" /></svg>
        </div>
      </div>

      {/* status bar */}
      <div className="flex h-[23px] shrink-0 items-center bg-[#f5f5f5] text-[11px] text-[#444]">
        <div className="ml-[11px] w-[54px] text-[10.3px]">Pronto</div>
        <MacroIcon />
        <div className="ml-[16px]"><AccessIcon /></div>
        <span className="ml-[2px] w-[132px] whitespace-nowrap font-semibold">Acessibilidade: investigar</span>
        <div className="ml-[908px]"><DisplayIcon /></div>
        <span className="ml-[2px] w-[117px] whitespace-nowrap text-[10.6px]">Exibir Configurações</span>
        <div className="flex h-full w-[42px] items-center justify-center bg-[#dcdcdc]">
          <svg width="14" height="13" viewBox="0 0 14 13" fill="none" stroke="#444"><rect x=".5" y=".5" width="13" height="12" /><path d="M5 .5v12M9.500.5v12M.5 4.500h13M.5 8.500h13" /></svg>
        </div>
        <div className="flex w-[42px] justify-center">
          <svg width="15" height="13" viewBox="0 0 15 13" fill="none" stroke="#555"><rect x=".5" y=".5" width="14" height="12" /><rect x="3.500" y="2.500" width="8" height="8" /><path d="M5 5h5M5 7h5M5 9h5" /></svg>
        </div>
        <div className="flex w-[42px] justify-center">
          <svg width="15" height="13" viewBox="0 0 15 13" fill="none" stroke="#444"><path d="M.5 12.500V.5h14v12zM.5 9h14M7.500.5V7" /></svg>
        </div>
        <div className="ml-[7px] h-px w-[8px] bg-[#555]" />
        <div className="relative ml-[8px] flex h-[11px] w-[100px] items-center">
          <div className="h-px w-full bg-[#777]" />
          <div className="absolute left-[44px] top-0 h-[11px] w-[5px] bg-[#666]" />
        </div>
        <span className="ml-[6px] text-[14px] leading-none text-[#555]">+</span>
        <span className="ml-[12px] text-[11px]">90%</span>
      </div>
    </div>
  );
}
